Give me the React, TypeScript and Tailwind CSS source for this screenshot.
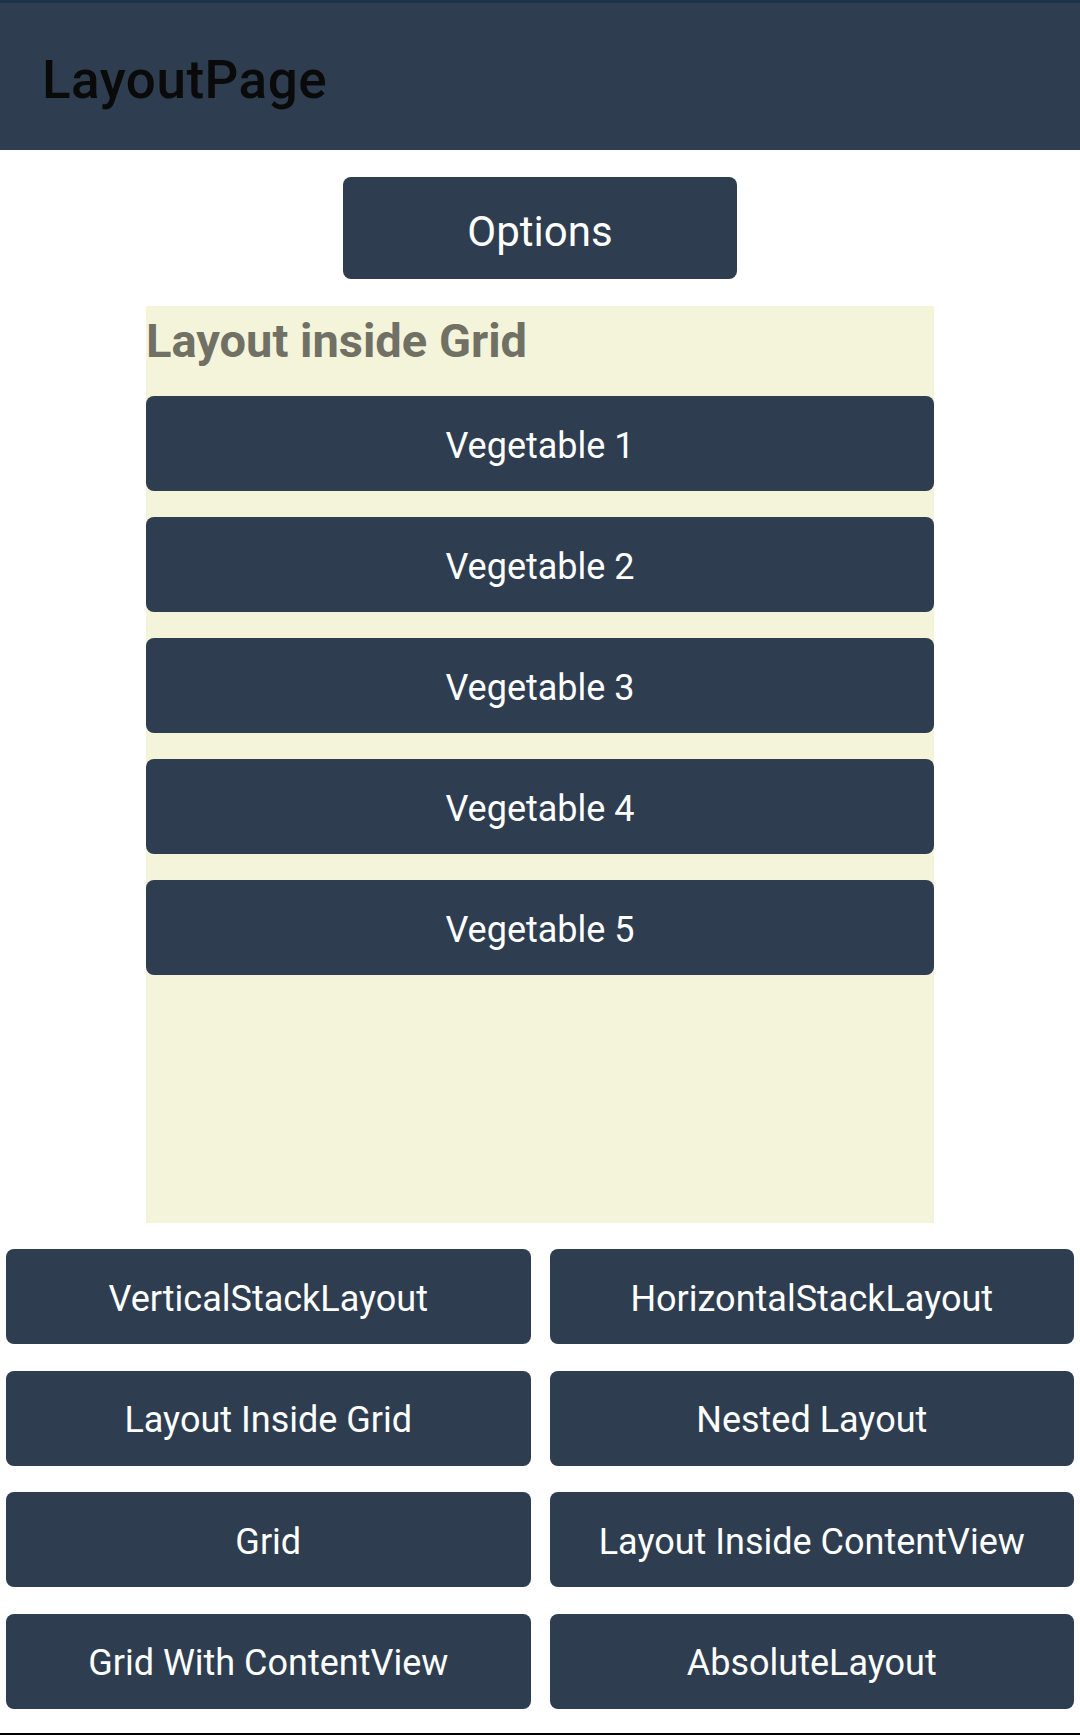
const vegetables = ['Vegetable 1', 'Vegetable 2', 'Vegetable 3', 'Vegetable 4', 'Vegetable 5']

const navButtons = [
  'VerticalStackLayout',
  'HorizontalStackLayout',
  'Layout Inside Grid',
  'Nested Layout',
  'Grid',
  'Layout Inside ContentView',
  'Grid With ContentView',
  'AbsoluteLayout',
]

function App() {
  return (
    <div className="h-[1735px] bg-white flex flex-col font-['Roboto',sans-serif]">
      {/* Title bar */}
      <header className="h-[150px] bg-[#2e3e50] border-t-[3px] border-[#1e3247] flex items-center pt-[7px] pl-[42px]">
        <h1 className="text-[53px] leading-none font-medium tracking-[0.5px] text-[#0a0a0a]">LayoutPage</h1>
      </header>

      <div className="flex justify-center mt-[27px]">
        <button className="w-[394px] h-[102px] rounded-lg bg-[#2e3e50] text-white text-[42px] pt-[6px]">
          Options
        </button>
      </div>

      {/* Layout inside Grid panel */}
      <section className="mx-auto mt-[27px] w-[788px] h-[917px] bg-[#f4f4db] flex flex-col">
        <h2 className="text-[47px] leading-[70px] font-bold text-[#707064] mb-[20px]">Layout inside Grid</h2>
        <div className="flex flex-col gap-[26px]">
          {vegetables.map(v => (
            <button key={v} className="h-[95px] rounded-lg bg-[#2e3e50] text-white text-[36px] pt-[4px]">
              {v}
            </button>
          ))}
        </div>
      </section>

      <div className="grid grid-cols-2 gap-x-[19px] gap-y-[26.5px] px-[6px] mt-[26px]">
        {navButtons.map(b => (
          <button key={b} className="h-[95px] rounded-lg bg-[#2e3e50] text-white text-[36px] pt-[4px]">
            {b}
          </button>
        ))}
      </div>

      <div className="mt-auto h-[2px] bg-black" />
    </div>
  )
}

export default App
